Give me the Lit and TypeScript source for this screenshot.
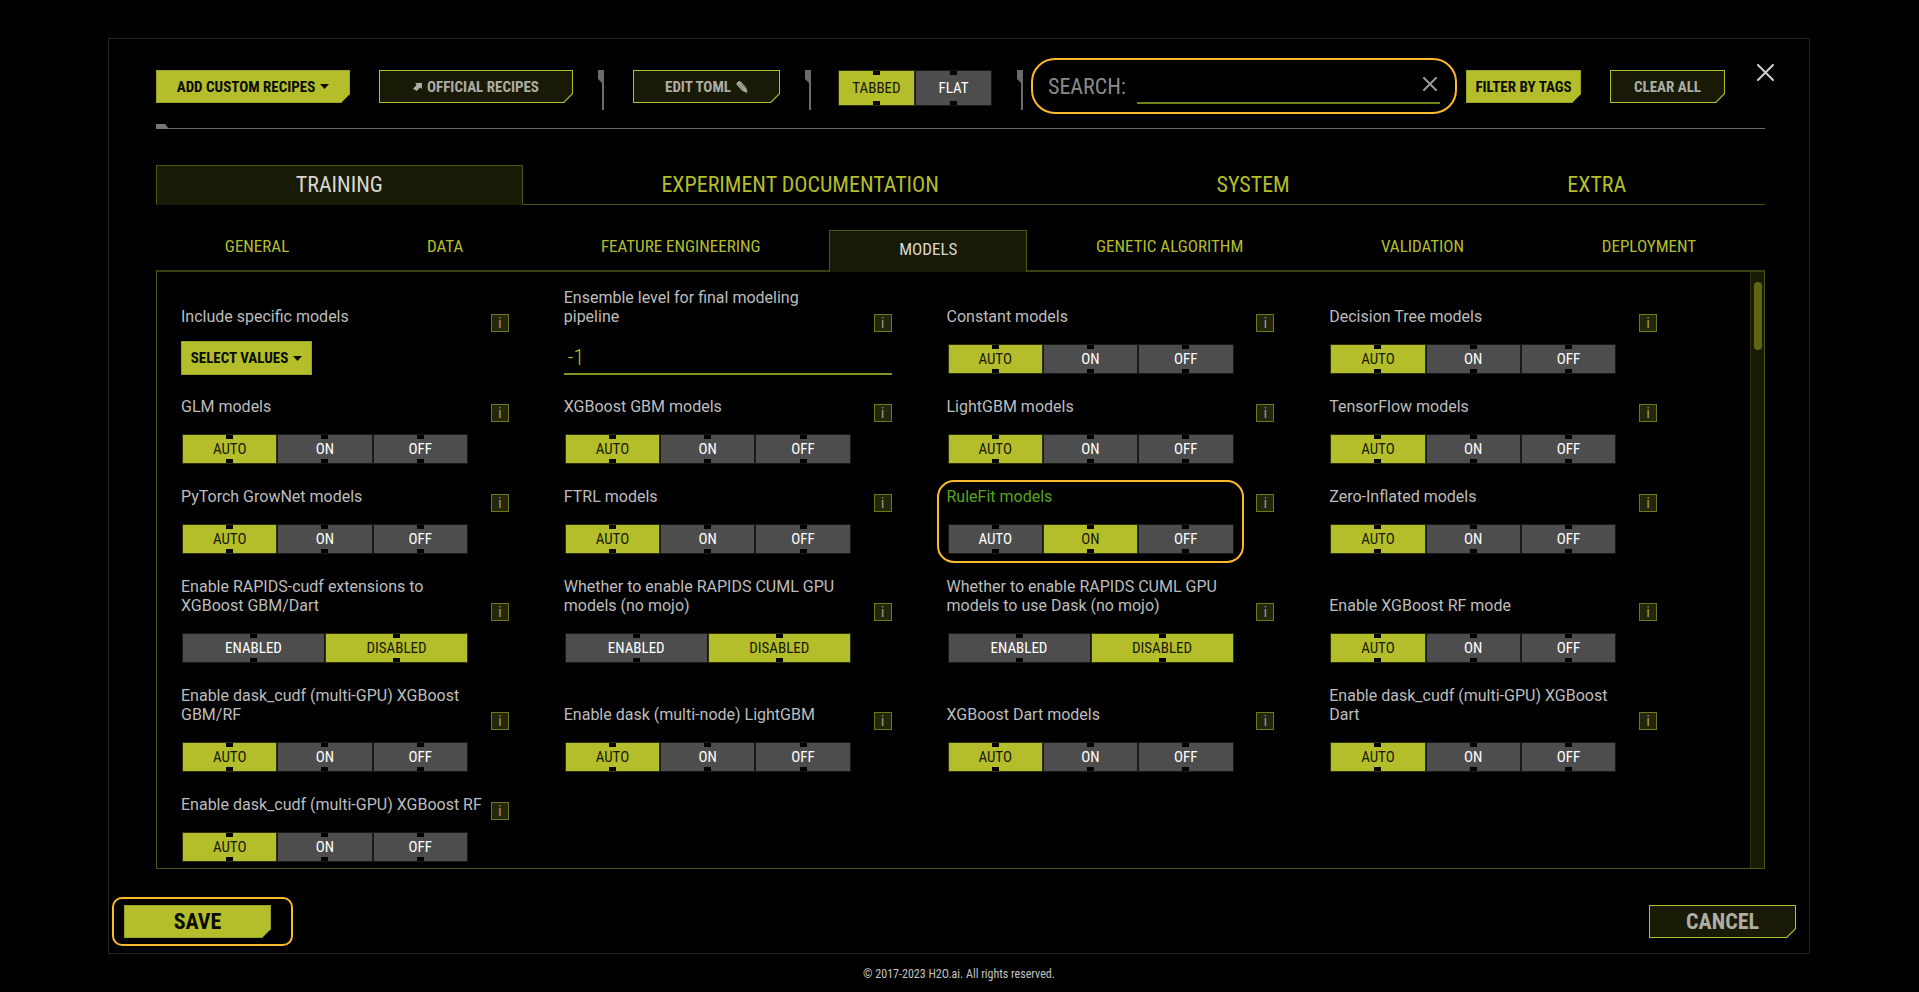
import { LitElement, html, css, svg, nothing } from "lit";
import { customElement, property, state } from "lit/decorators.js";
import { classMap } from "lit/directives/class-map.js";

const caret = html`<svg class="caret" viewBox="0 0 9 5" width="9" height="5" aria-hidden="true">
  <path d="M0 0h9L4.5 5z" fill="currentColor" />
</svg>`;

const arrow = html`<svg viewBox="0 0 9 8" width="9" height="8" aria-hidden="true">
  <path d="M2.2 0H9v6L7 4.6 3.8 8 0 5.8 3.6 2z" fill="currentColor" />
</svg>`;

const pencil = html`<svg viewBox="0 0 12 12" width="12" height="12" aria-hidden="true">
  <path d="M.6 1.9 2.6.2 4.8.4l5.6 6.5L11.4 12 6.2 9.8.6 3.6z" fill="currentColor" />
  <path d="M2.6 3.2l5 5.6M4.4 2l5 5.6" stroke="#191a06" stroke-width=".4" />
</svg>`;

const cross = (size: number, width: number) => html`<svg
  viewBox="0 0 ${size} ${size}" width=${size} height=${size} aria-hidden="true">
  ${svg`<path d="M1 1L${size - 1} ${size - 1}M${size - 1} 1L1 ${size - 1}" fill="none"
    stroke="currentColor" stroke-width=${width} stroke-linecap="round" />`}
</svg>`;

@customElement("segment-toggle")
class SegmentToggle extends LitElement {
  @property({ attribute: false }) options: string[] = [];
  @property() value = "";
  @property() label = "";

  static styles = css`
    :host {
      display: block;
    }
    .group {
      display: grid;
      grid-auto-flow: column;
      grid-auto-columns: 1fr;
      width: 100%;
      height: 100%;
    }
    .segment {
      --fill: #4d4d4d;
      --notch: linear-gradient(#000, #000);
      margin: 0;
      padding: 0;
      border: 1px solid #191919;
      background: var(--notch) top center / 7px 4px no-repeat,
        var(--notch) bottom center / 7px 4px no-repeat, var(--fill);
      color: #fff;
      font: 400 15px / 20px "Roboto Condensed", "Liberation Sans Narrow", "Roboto", sans-serif;
      cursor: pointer;
    }
    .active {
      --fill: #b4be2b;
      border-color: #2c2f0a;
      color: #171903;
    }
  `;

  render() {
    return html`<div class="group" role="group" aria-label=${this.label}>
      ${this.options.map(
        (option) => html`<button
          class=${classMap({ segment: true, active: option === this.value })}
          aria-pressed=${option === this.value}
          @click=${() => (this.value = option)}
        >${option}</button>`
      )}
    </div>`;
  }
}

type Setting = {
  name: string;
  kind?: "select" | "number" | "binary";
  value?: string;
  changed?: boolean;
};

const SETTINGS: Setting[] = [
  { name: "Include specific models", kind: "select" },
  { name: "Ensemble level for final modeling\npipeline", kind: "number", value: "-1" },
  { name: "Constant models" },
  { name: "Decision Tree models" },
  { name: "GLM models" },
  { name: "XGBoost GBM models" },
  { name: "LightGBM models" },
  { name: "TensorFlow models" },
  { name: "PyTorch GrowNet models" },
  { name: "FTRL models" },
  { name: "RuleFit models", value: "ON", changed: true },
  { name: "Zero-Inflated models" },
  { name: "Enable RAPIDS-cudf extensions to\nXGBoost GBM/Dart", kind: "binary" },
  { name: "Whether to enable RAPIDS CUML GPU\nmodels (no mojo)", kind: "binary" },
  { name: "Whether to enable RAPIDS CUML GPU\nmodels to use Dask (no mojo)", kind: "binary" },
  { name: "Enable XGBoost RF mode" },
  { name: "Enable dask_cudf (multi-GPU) XGBoost\nGBM/RF" },
  { name: "Enable dask (multi-node) LightGBM" },
  { name: "XGBoost Dart models" },
  { name: "Enable dask_cudf (multi-GPU) XGBoost\nDart" },
  { name: "Enable dask_cudf (multi-GPU) XGBoost RF" },
];

const SECTIONS = ["TRAINING", "EXPERIMENT DOCUMENTATION", "SYSTEM", "EXTRA"];
const TOPICS = [
  "GENERAL",
  "DATA",
  "FEATURE ENGINEERING",
  "MODELS",
  "GENETIC ALGORITHM",
  "VALIDATION",
  "DEPLOYMENT",
];

@customElement("app-root")
class AppRoot extends LitElement {
  @state() private section = "TRAINING";
  @state() private topic = "MODELS";

  static styles = css`
    :host {
      --lime: #b4be2b;
      --line: #505511;
      --tint: #191a06;
      --ring: #fdb92e;
      --narrow: "Roboto Condensed", "Liberation Sans Narrow", "Roboto", sans-serif;
      --body: "Roboto", "Liberation Sans", sans-serif;
      display: flex;
      flex-direction: column;
      box-sizing: border-box;
      height: 100vh;
      padding: 38px 109px 0 108px;
      background: #000;
      color: #bdbdbd;
      font-family: var(--narrow);
    }
    button {
      margin: 0;
      font-family: inherit;
      cursor: pointer;
    }
    .dialog {
      flex: 1;
      min-height: 0;
      display: flex;
      flex-direction: column;
      border: 1px solid #242424;
    }
    .toolbar {
      display: flex;
      align-items: flex-start;
      padding: 19px 35px 0 47px;
      height: 66px;
    }
    .toolbar > .button,
    .toolbar > .divider,
    .toolbar > .view {
      margin-top: 12px;
    }
    .button {
      flex: none;
      display: flex;
      align-items: center;
      justify-content: center;
      gap: 5px;
      box-sizing: border-box;
      height: 33px;
      padding: 0;
      border: 1px solid var(--lime);
      background: linear-gradient(315deg, var(--lime) 7px, var(--tint) 8px) border-box;
      clip-path: polygon(0 0, 100% 0, 100% calc(100% - 9px), calc(100% - 9px) 100%, 0 100%);
      color: #adada5;
      font-size: 15px;
      font-weight: 700;
      line-height: 20px;
      white-space: nowrap;
    }
    .solid {
      border-color: #99a224;
      background: var(--lime);
      color: #0b0c00;
    }
    .wide {
      width: 194px;
    }
    .medium {
      width: 147px;
    }
    .compact {
      width: 115px;
    }
    .large {
      font-size: 22px;
    }
    .divider {
      flex: none;
      width: 6px;
      height: 40px;
      background: #6b6b6b;
      clip-path: polygon(0 0, 100% 0, 100% 100%, 4px 100%, 4px 13px, 0 9px);
    }
    .gap-s {
      margin-left: 9px;
    }
    .gap-m {
      margin-left: 25px;
    }
    .gap-l {
      margin-left: 29px;
    }
    .view {
      flex: none;
      width: 154px;
      height: 36px;
    }
    .toolbar > .view {
      margin-left: 27px;
    }
    .search {
      flex: 1;
      min-width: 0;
      display: flex;
      align-items: center;
      box-sizing: border-box;
      height: 56px;
      margin-left: 8px;
      padding: 0 15px;
      border: 2px solid var(--ring);
      border-radius: 24px;
    }
    .search-label {
      margin-right: 11px;
      padding-top: 2px;
      color: #8a8a8a;
      font-size: 22px;
      line-height: 28px;
    }
    .search-box {
      flex: 1;
      min-width: 0;
      display: flex;
      align-items: center;
      height: 30px;
      padding: 0 3px 3px 0;
      border-bottom: 2px solid #76801a;
    }
    .search-input {
      flex: 1;
      min-width: 0;
      border: 0;
      outline: 0;
      background: none;
      color: var(--lime);
      font: 300 20px / 24px var(--narrow);
    }
    .icon-button {
      display: grid;
      place-items: center;
      flex: none;
      padding: 0;
      border: 0;
      background: none;
      color: #9a9a9a;
    }
    .close {
      margin: 6px 0 0 32px;
      color: #cfcfcf;
    }
    .rule {
      height: 5px;
      margin: 0 44px 0 47px;
      background: linear-gradient(#6b6b6b, #6b6b6b) bottom / 100% 1px no-repeat;
    }
    .rule-tag {
      width: 13px;
      height: 5px;
      background: #777;
      clip-path: polygon(0 0, 9px 0, 100% 100%, 0 100%);
    }
    .tabs {
      display: flex;
      flex: none;
      height: 40px;
      margin: 36px 44px 0 47px;
    }
    .tab {
      flex: 1 1 auto;
      padding: 0;
      border: 0;
      border-bottom: 1px solid var(--line);
      background: none;
      color: var(--lime);
      font-size: 22px;
      font-weight: 400;
      line-height: 26px;
    }
    .tab.current {
      border: 1px solid var(--line);
      border-bottom-color: var(--tint);
      background: var(--tint);
      color: #d8d8d0;
    }
    .topics {
      margin-top: 25px;
    }
    .topics .tab {
      padding: 0 0 8px;
      border-bottom: 0;
      font-size: 17px;
      line-height: 20px;
    }
    .topics .tab.current {
      z-index: 1;
      padding: 0 0 5px;
      margin-bottom: -2px;
      border-bottom: 0;
    }
    .panel {
      flex: 1;
      min-height: 0;
      display: flex;
      margin: 0 44px 0 47px;
      border: 1px solid var(--line);
      border-top: 2px solid #3a3d0d;
    }
    .settings {
      flex: 1;
      min-width: 0;
      display: grid;
      grid-template-columns: repeat(4, 1fr);
      align-content: start;
      align-items: end;
      row-gap: 22px;
      overflow: hidden;
      padding: 16px 38px 0 24px;
    }
    .rail {
      flex: none;
      width: 8px;
      padding: 10px 2px 0 3px;
      border-left: 1px solid #33360c;
      background: var(--tint);
    }
    .thumb {
      height: 68px;
      border-radius: 4px;
      background: #5d6414;
    }
    .setting {
      position: relative;
      margin-right: 55px;
    }
    .ring {
      position: absolute;
      inset: -7px 30px -8px -10px;
      border: 2px solid var(--ring);
      border-radius: 17px;
      pointer-events: none;
    }
    .head {
      display: flex;
      align-items: flex-end;
      justify-content: space-between;
      margin-bottom: 9px;
    }
    .name {
      padding-bottom: 6px;
      font: 16px / 19px var(--body);
      white-space: pre;
    }
    .changed .name {
      color: #57a51c;
    }
    .info {
      flex: none;
      width: 18px;
      height: 18px;
      padding: 0;
      border: 1px solid #6f7718;
      background: #24260a;
      color: #a3a38c;
      font-size: 14px;
      line-height: 15px;
    }
    .control {
      display: flex;
      align-items: flex-end;
      height: 34px;
    }
    .choice {
      width: 286px;
      height: 30px;
      margin: 0 0 1px 1px;
    }
    .select {
      width: 131px;
      height: 34px;
      clip-path: none;
    }
    .number {
      box-sizing: border-box;
      width: 100%;
      height: 34px;
      padding: 0 4px;
      border: 0;
      border-bottom: 2px solid #8a9321;
      outline: 0;
      background: none;
      color: var(--lime);
      font: 300 22px / 26px var(--narrow);
    }
    .actions {
      flex: none;
      display: flex;
      align-items: center;
      justify-content: space-between;
      padding: 28px 13px 7px 3px;
    }
    .save {
      padding: 6px 20px 6px 10px;
      border: 2px solid var(--ring);
      border-radius: 10px;
    }
    .copyright {
      flex: none;
      height: 38px;
      color: #c4c4c4;
      font: 12px / 40px var(--narrow);
      text-align: center;
    }
  `;

  private control(setting: Setting, id: string) {
    if (setting.kind === "select")
      return html`<button class="button solid select" id=${id}>SELECT VALUES ${caret}</button>`;
    if (setting.kind === "number")
      return html`<input class="number" id=${id} type="text" .value=${setting.value ?? ""} />`;
    const binary = setting.kind === "binary";
    return html`<segment-toggle
      class="choice"
      id=${id}
      label=${setting.name}
      .options=${binary ? ["ENABLED", "DISABLED"] : ["AUTO", "ON", "OFF"]}
      .value=${setting.value ?? (binary ? "DISABLED" : "AUTO")}
    ></segment-toggle>`;
  }

  private setting(setting: Setting, index: number) {
    const id = `setting-${index}`;
    return html`<div class=${classMap({ setting: true, changed: !!setting.changed })}>
      <div class="head">
        <label class="name" for=${id}>${setting.name}</label>
        <button class="info" aria-label="About ${setting.name}">i</button>
      </div>
      <div class="control">${this.control(setting, id)}</div>
      ${setting.changed ? html`<div class="ring"></div>` : nothing}
    </div>`;
  }

  private tab(name: string, current: string, pick: (name: string) => void) {
    return html`<button
      role="tab"
      class=${classMap({ tab: true, current: name === current })}
      aria-selected=${name === current}
      @click=${() => pick(name)}
    >${name}</button>`;
  }

  render() {
    return html`
      <main class="dialog">
        <header class="toolbar">
          <button class="button solid wide">ADD CUSTOM RECIPES ${caret}</button>
          <button class="button wide gap-l">${arrow} OFFICIAL RECIPES</button>
          <div class="divider gap-m"></div>
          <button class="button medium gap-l">EDIT TOML ${pencil}</button>
          <div class="divider gap-m"></div>
          <segment-toggle
            class="view"
            label="Layout"
            .options=${["TABBED", "FLAT"]}
            .value=${"TABBED"}
          ></segment-toggle>
          <div class="divider gap-m"></div>
          <div class="search">
            <label class="search-label" for="search">SEARCH:</label>
            <div class="search-box">
              <input class="search-input" id="search" type="text" />
              <button class="icon-button" aria-label="Clear search">${cross(14, 2)}</button>
            </div>
          </div>
          <button class="button solid compact gap-s">FILTER BY TAGS</button>
          <button class="button compact gap-l">CLEAR ALL</button>
          <button class="icon-button close" aria-label="Close">${cross(17, 2)}</button>
        </header>
        <div class="rule"><div class="rule-tag"></div></div>
        <nav class="tabs" role="tablist">
          ${SECTIONS.map((name) => this.tab(name, this.section, (n) => (this.section = n)))}
        </nav>
        <nav class="tabs topics" role="tablist">
          ${TOPICS.map((name) => this.tab(name, this.topic, (n) => (this.topic = n)))}
        </nav>
        <section class="panel">
          <div class="settings">${SETTINGS.map((s, i) => this.setting(s, i))}</div>
          <div class="rail"><div class="thumb"></div></div>
        </section>
        <div class="actions">
          <div class="save"><button class="button solid medium large">SAVE</button></div>
          <button class="button medium large">CANCEL</button>
        </div>
      </main>
      <footer class="copyright">© 2017-2023 H2O.ai. All rights reserved.</footer>
    `;
  }
}
